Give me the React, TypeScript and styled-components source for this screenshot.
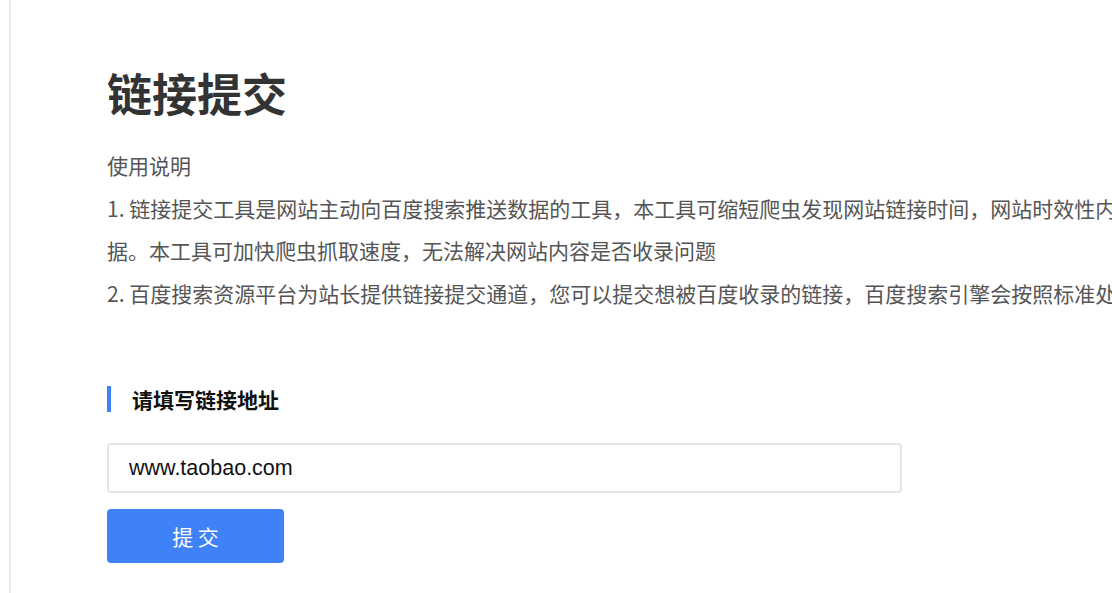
import React from 'react';
import styled, {createGlobalStyle} from 'styled-components';

const GlobalStyle = createGlobalStyle`
  html, body {
    margin: 0;
    padding: 0;
    background: #fff;
    overflow: hidden;
  }
  body {
    font-family: "Noto Sans CJK SC", "Liberation Sans", sans-serif;
  }
`;

const Page = styled.div`
  margin-left: 9px;
  min-height: 100vh;
  border-left: 2px solid #ececec;
  padding: 70px 0 0 96px;
  box-sizing: border-box;
`;

const Title = styled.h1`
  margin: 0;
  font-size: 45px;
  line-height: 45px;
  font-weight: 700;
  color: #333;
  letter-spacing: 0;
`;

const Guide = styled.div`
  margin-top: 29px;
  width: 1432px;
  font-size: 21px;
  line-height: 42.5px;
  color: #555;
`;

const SectionTitle = styled.h2`
  margin: 72px 0 0;
  height: 26px;
  display: flex;
  align-items: center;
  border-left: 4px solid #3f81f7;
  padding-left: 21px;
  font-size: 21px;
  font-weight: 700;
  color: #111;
`;

const UrlInput = styled.input`
  display: block;
  margin-top: 31px;
  width: 795px;
  height: 50px;
  box-sizing: border-box;
  border: 2px solid #e6e6e6;
  border-radius: 4px;
  padding: 0 20px;
  font-family: "Liberation Sans", Arial, sans-serif;
  font-size: 21.5px;
  color: #111;
  outline: none;
`;

const SubmitButton = styled.button`
  display: block;
  margin-top: 16px;
  width: 177px;
  height: 54px;
  border: none;
  border-radius: 4px;
  background: #3f81f7;
  color: #fff;
  font-family: "Noto Sans CJK SC", sans-serif;
  font-size: 21px;
  cursor: pointer;
`;

export default function App() {
  return (
    <>
      <GlobalStyle />
      <Page>
        <Title>链接提交</Title>
        <Guide>
          <div>使用说明</div>
          <div>
            1. 链接提交工具是网站主动向百度搜索推送数据的工具，本工具可缩短爬虫发现网站链接时间，网站时效性内容建议使用链接提交工具，实时向搜索推送数据。本工具可加快爬虫抓取速度，无法解决网站内容是否收录问题
          </div>
          <div>
            2. 百度搜索资源平台为站长提供链接提交通道，您可以提交想被百度收录的链接，百度搜索引擎会按照标准处理，但不保证一定能够收录您提交的链接。
          </div>
        </Guide>
        <SectionTitle>请填写链接地址</SectionTitle>
        <UrlInput defaultValue="www.taobao.com" />
        <SubmitButton>提 交</SubmitButton>
      </Page>
    </>
  );
}
